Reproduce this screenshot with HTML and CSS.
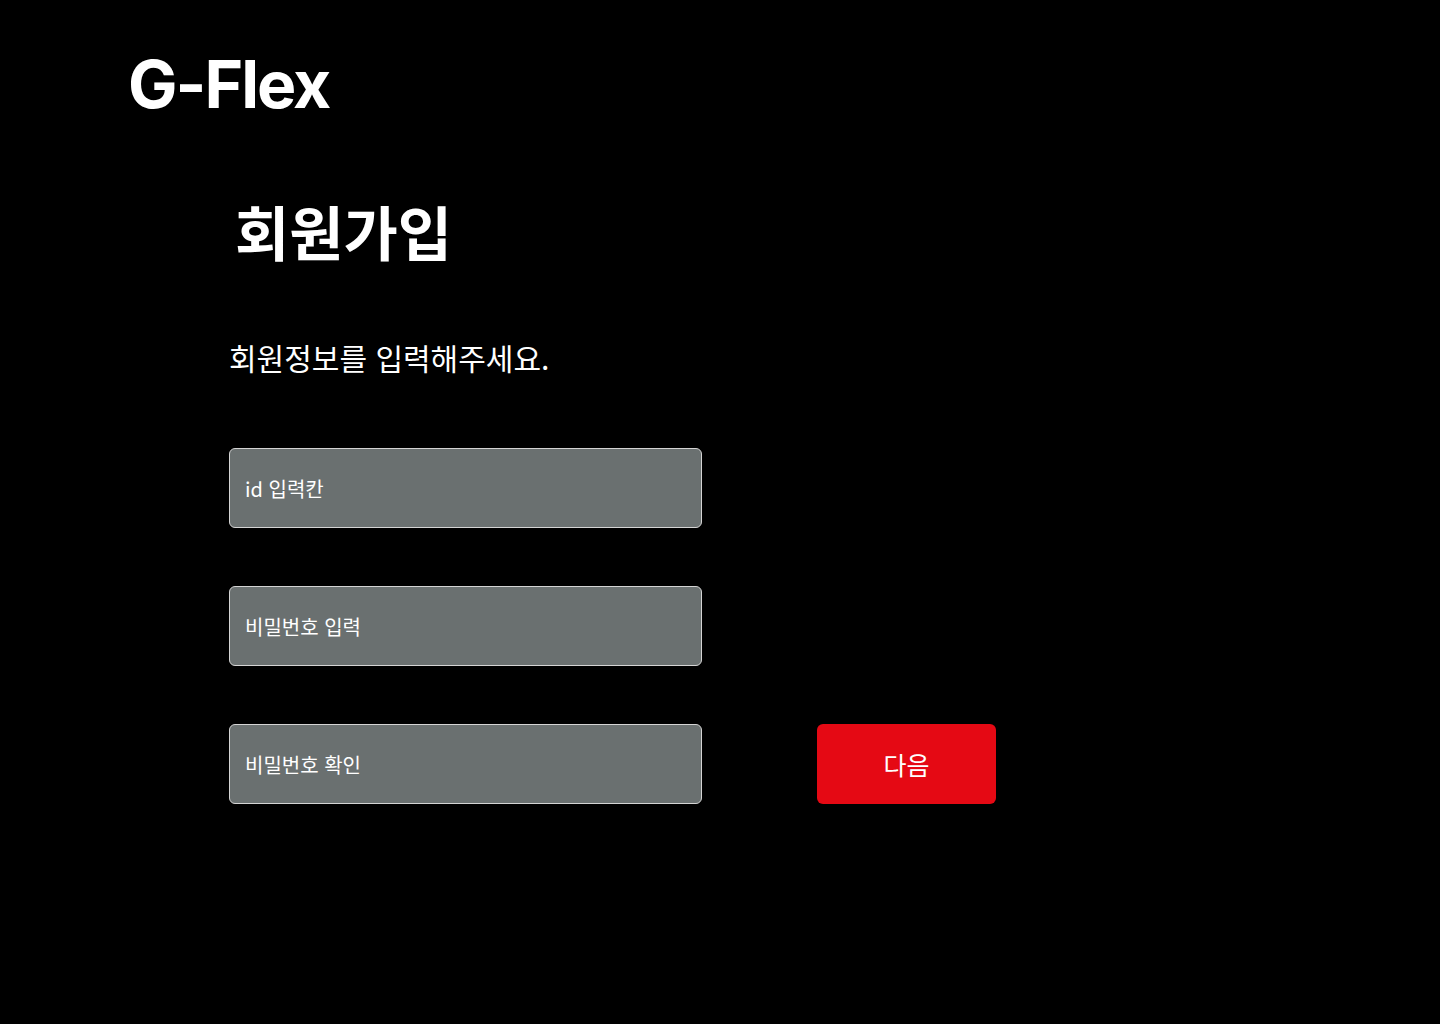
FILE: index.html
```html
<!DOCTYPE html>
<html lang="ko">
<head>
<meta charset="utf-8">
<title>G-Flex 회원가입</title>
<link rel="stylesheet" href="styles.css">
</head>
<body>
<header class="header">
  <div class="logo">G-Flex</div>
</header>
<main class="main">
  <h1 class="title">회원가입</h1>
  <p class="subtitle">회원정보를 입력해주세요.</p>
  <form class="form">
    <div class="row"><input class="field" type="text" placeholder="id 입력칸"></div>
    <div class="row"><input class="field" type="password" placeholder="비밀번호 입력"></div>
    <div class="row">
      <input class="field" type="password" placeholder="비밀번호 확인">
      <button class="next" type="button">다음</button>
    </div>
  </form>
</main>
</body>
</html>
```
FILE: styles.css
```css
* { box-sizing: border-box; }
html, body { margin: 0; padding: 0; background: #000; }
body {
  width: 1440px;
  height: 1024px;
  color: #fff;
  font-family: "Noto Sans CJK KR", "Noto Sans", sans-serif;
}
.header {
  padding: 44px 0 0 128px;
}
.logo {
  font-family: Inter, "Noto Sans", sans-serif;
  font-weight: 700;
  font-size: 66px;
  line-height: 80px;
  letter-spacing: -2px;
}
.main {
  padding: 0 0 0 229px;
}
.title {
  margin: 67px 0 0 6px;
  font-size: 59px;
  font-weight: 700;
  line-height: 80px;
}
.subtitle {
  margin: 66px 0 0 0;
  font-size: 30px;
  font-weight: 400;
  line-height: 40px;
}
.form {
  margin-top: 71px;
  display: flex;
  flex-direction: column;
  gap: 58px;
}
.row {
  display: flex;
  align-items: center;
  gap: 115px;
}
.field {
  width: 473px;
  height: 80px;
  padding: 0 15px;
  background: #6a7070;
  border: 1px solid #d4d4d4;
  border-radius: 6px;
  font-family: "Noto Sans CJK KR", "Noto Sans", sans-serif;
  font-size: 20px;
  color: #fff;
  outline: none;
}
.field::placeholder { color: #fff; opacity: 1; }
.next {
  width: 179px;
  height: 80px;
  background: #e50914;
  border: none;
  border-radius: 6px;
  color: #fff;
  font-family: "Noto Sans CJK KR", "Noto Sans", sans-serif;
  font-size: 25px;
  cursor: pointer;
}
```
